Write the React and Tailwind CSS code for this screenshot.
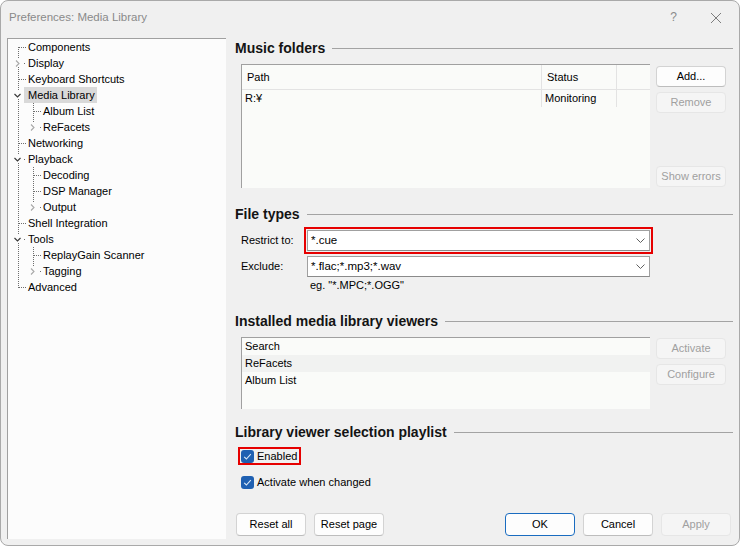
import { Fragment } from 'react'

// Árbol de páginas de preferencias (nivel 0 / nivel 1)
const tree = [
  { label: 'Components', level: 0, first: true },
  { label: 'Display', level: 0, chevron: 'right' },
  { label: 'Keyboard Shortcuts', level: 0 },
  { label: 'Media Library', level: 0, chevron: 'down', selected: true },
  { label: 'Album List', level: 1 },
  { label: 'ReFacets', level: 1, chevron: 'right', last: true },
  { label: 'Networking', level: 0 },
  { label: 'Playback', level: 0, chevron: 'down' },
  { label: 'Decoding', level: 1 },
  { label: 'DSP Manager', level: 1 },
  { label: 'Output', level: 1, chevron: 'right', last: true },
  { label: 'Shell Integration', level: 0 },
  { label: 'Tools', level: 0, chevron: 'down' },
  { label: 'ReplayGain Scanner', level: 1 },
  { label: 'Tagging', level: 1, chevron: 'right', last: true },
  { label: 'Advanced', level: 0, last: true },
]

const DOT = '#6e6e6e'

function Chevron({ dir, x }) {
  if (dir === 'down') {
    return <polyline points={`${x - 3.5},7 ${x - 0.5},10 ${x + 2.5},7`} fill="none" stroke="#3a3a3a" strokeWidth="1.2" />
  }
  return <polyline points={`${x},5.5 ${x + 3},8.5 ${x},11.5`} fill="none" stroke="#a8a8a8" strokeWidth="1.1" />
}

function Gutter({ item }) {
  const w = item.level === 0 ? 20 : 35
  const dash = { stroke: DOT, strokeWidth: 1, strokeDasharray: '1 1', shapeRendering: 'crispEdges' }
  const lines = []
  if (item.level === 0) {
    const y1 = item.first ? 8 : 0
    const y2 = item.last ? 9 : 16
    if (item.chevron) {
      if (!item.first) lines.push(<line key="a" x1="10.5" y1={y1} x2="10.5" y2="4" {...dash} />)
      lines.push(<line key="b" x1="10.5" y1="12" x2="10.5" y2={y2} {...dash} />)
      lines.push(<line key="h" x1="16" y1="8.5" x2="18" y2="8.5" {...dash} />)
    } else {
      lines.push(<line key="a" x1="10.5" y1={y1} x2="10.5" y2={y2} {...dash} />)
      lines.push(<line key="h" x1="11" y1="8.5" x2="19" y2="8.5" {...dash} />)
    }
  } else {
    lines.push(<line key="p" x1="10.5" y1="0" x2="10.5" y2="16" {...dash} />)
    if (item.chevron) {
      lines.push(<line key="a" x1="25.5" y1="0" x2="25.5" y2="4" {...dash} />)
      lines.push(<line key="h" x1="32" y1="8.5" x2="34" y2="8.5" {...dash} />)
    } else {
      lines.push(<line key="a" x1="25.5" y1="0" x2="25.5" y2={item.last ? 9 : 16} {...dash} />)
      lines.push(<line key="h" x1="26" y1="8.5" x2="34" y2="8.5" {...dash} />)
    }
  }
  return (
    <svg width={w} height="16" className="shrink-0">
      {lines}
      {item.chevron && <Chevron dir={item.chevron} x={item.level === 0 ? (item.chevron === 'down' ? 10 : 8) : 23} />}
    </svg>
  )
}

function Heading({ children, className }) {
  return (
    <div className={`flex h-[16px] items-center ${className}`}>
      <span className="text-[14px] leading-[16px] font-bold text-[#141414]">{children}</span>
      <div className="ml-[7px] h-px flex-1 bg-[#a3a3a3]" />
    </div>
  )
}

function Btn({ children, disabled, primary, tall }) {
  const base = 'flex w-[70px] items-center justify-center rounded-[4px] border text-[11px]'
  const h = tall ? 'h-[23px]' : 'h-[21px]'
  const look = disabled
    ? 'border-[#e6e6e6] bg-[#f5f5f5] text-[#a0a0a0]'
    : primary
      ? 'border-[#1a6cc0] bg-[#fdfdfd] text-black'
      : 'border-[#d3d3d3] border-b-[#bdbdbd] bg-[#fdfdfd] text-black'
  return <div className={`${base} ${h} ${look}`}>{children}</div>
}

function Combo({ value }) {
  return (
    <div className="flex h-[21px] w-[343px] items-center border border-[#a0a0a0] border-b-[#8a8a8a] bg-white pr-[4px] pl-[3px]">
      <span className="flex-1 text-[11.5px]">{value}</span>
      <svg width="9" height="5">
        <polyline points="0.5,0.5 4.5,4.5 8.5,0.5" fill="none" stroke="#606060" strokeWidth="1" />
      </svg>
    </div>
  )
}

function Check() {
  return (
    <div className="flex h-[13px] w-[13px] items-center justify-center rounded-[3px] bg-[#1f60b2]">
      <svg width="13" height="13">
        <polyline points="3.2,6.8 5.4,9 9.8,4.2" fill="none" stroke="#dce9f7" strokeWidth="1.1" />
      </svg>
    </div>
  )
}

export default function App() {
  return (
    <div className="flex h-[546px] w-[740px] flex-col overflow-hidden rounded-[8px] border border-[#a9a9a9] bg-[#f0f0f0] font-['Liberation_Sans',sans-serif] text-[11px] text-black">
      {/* Barra de título */}
      <div className="flex h-[37px] shrink-0 items-start pt-[8px] pl-[8px]">
        <span className="flex-1 text-[11.5px] leading-[16px] text-[#8a8a8a]">Preferences: Media Library</span>
        <span className="mt-[1px] mr-[33px] text-[12px] leading-[14px] text-[#8a8a8a]">?</span>
        <svg width="12" height="12" className="mt-[3px] mr-[17px]">
          <path d="M1 1 L11 11 M11 1 L1 11" stroke="#7d7d7d" strokeWidth="1" fill="none" />
        </svg>
      </div>

      <div className="flex flex-1 pb-[6px] pl-[6px]">
        {/* Árbol */}
        <div className="w-[219px] shrink-0 border-t border-l border-[#a0a0a0] bg-[#fcfcfc]">
          {tree.map((item) => (
            <div key={item.label} className="flex h-[16px] items-center">
              <Gutter item={item} />
              <span
                className={
                  item.selected
                    ? '-ml-[4px] h-[16px] bg-[#d9d9d9] pr-[2px] pl-[4px] leading-[16px]'
                    : 'leading-[16px]'
                }
              >
                {item.label}
              </span>
            </div>
          ))}
        </div>

        {/* Página */}
        <div className="flex flex-1 flex-col pr-[6px] pl-[9px]">
          <Heading className="mt-[2px]">Music folders</Heading>

          <div className="mt-[8px] flex">
            <div className="ml-[6px] h-[124px] w-[409px] border-t border-l border-[#a0a0a0] bg-[#fafbf9]">
              <div className="flex h-[25px] border-b border-[#e3e3e3]">
                <div className="flex w-[300px] items-center border-r border-[#e3e3e3] pl-[5px]">Path</div>
                <div className="flex w-[75px] items-center border-r border-[#e3e3e3] pl-[5px]">Status</div>
                <div className="flex-1" />
              </div>
              <div className="flex h-[17px]">
                <div className="flex w-[300px] items-center border-r border-[#e3e3e3] pl-[3px]">R:¥</div>
                <div className="flex w-[75px] items-center border-r border-[#e3e3e3] pl-[3px]">Monitoring</div>
                <div className="flex-1" />
              </div>
            </div>
            <div className="ml-[6px] flex flex-col pt-[2px]">
              <Btn>Add...</Btn>
              <div className="mt-[5px]">
                <Btn disabled>Remove</Btn>
              </div>
              <div className="mt-[53px]">
                <Btn disabled>Show errors</Btn>
              </div>
            </div>
          </div>

          <Heading className="mt-[18px]">File types</Heading>

          <div className="mt-[5px] ml-[6px] flex items-center">
            <span className="w-[63px]">Restrict to:</span>
            <div className="border-2 border-[#e60000] p-px">
              <Combo value="*.cue" />
            </div>
          </div>
          <div className="mt-[2px] ml-[6px] flex items-center">
            <span className="w-[66px]">Exclude:</span>
            <Combo value="*.flac;*.mp3;*.wav" />
          </div>
          <div className="mt-[1px] ml-[75px] h-[14px] leading-[14px]">eg. "*.MPC;*.OGG"</div>

          <Heading className="mt-[21px]">Installed media library viewers</Heading>

          <div className="mt-[8px] flex">
            <div className="ml-[6px] h-[72px] w-[409px] border-t border-l border-[#a0a0a0] bg-[#fafbf9]">
              {['Search', 'ReFacets', 'Album List'].map((v, i) => (
                <Fragment key={v}>
                  <div className={`flex h-[17px] items-center pl-[3px] ${i === 1 ? 'bg-[#f1f2f1]' : ''}`}>{v}</div>
                </Fragment>
              ))}
            </div>
            <div className="ml-[6px] flex flex-col pt-[1px]">
              <Btn disabled>Activate</Btn>
              <div className="mt-[5px]">
                <Btn disabled>Configure</Btn>
              </div>
            </div>
          </div>

          <Heading className="mt-[15px]">Library viewer selection playlist</Heading>

          <div className="mt-[7px] ml-[3px] flex">
            <div className="flex h-[18px] items-center border-2 border-[#e60000] p-px pr-[2px]">
              <Check />
              <span className="ml-[3px] leading-[14px]">Enabled</span>
            </div>
          </div>
          <div className="mt-[10px] ml-[6px] flex h-[14px] items-center">
            <Check />
            <span className="ml-[3px] leading-[14px]">Activate when changed</span>
          </div>

          <div className="mt-auto mr-[2px] mb-[3px] ml-[1px] flex gap-[8px]">
            <Btn tall>Reset all</Btn>
            <Btn tall>Reset page</Btn>
            <div className="flex-1" />
            <Btn tall primary>OK</Btn>
            <Btn tall>Cancel</Btn>
            <Btn tall disabled>Apply</Btn>
          </div>
        </div>
      </div>
    </div>
  )
}
